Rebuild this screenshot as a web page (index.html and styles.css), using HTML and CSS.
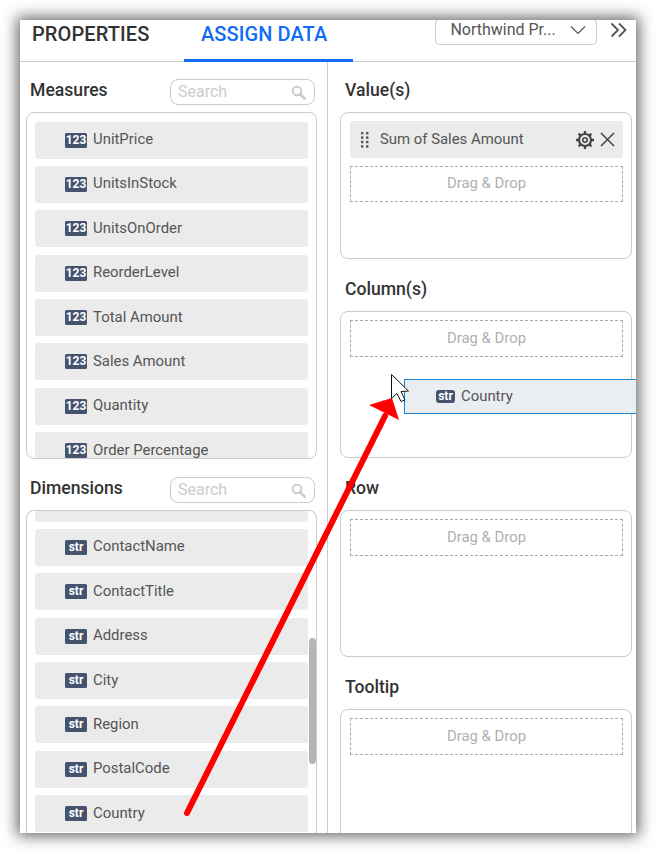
FILE: index.html
```html
<!DOCTYPE html>
<html lang="en">
<head>
    <meta charset="UTF-8">
    <title>Assign Data</title>
    <link rel="stylesheet" href="styles.css">
</head>
<body>
    <div class="panel">
        <div class="tabs">
            <div class="tab">PROPERTIES</div>
            <div class="tab active">ASSIGN DATA</div>
            <div class="source">
                <span>Northwind Pr...</span>
                <svg width="16" height="10" viewBox="0 0 16 10"><path d="M1 1.5 8 8.5 15 1.5" fill="none" stroke="#555" stroke-width="1.2"/></svg>
            </div>
            <svg class="collapse" width="18" height="16" viewBox="0 0 18 16"><path d="M1.500 1.500 8 8 1.500 14.500M9 1.500 15.500 8 9 14.500" fill="none" stroke="#555" stroke-width="1.8"/></svg>
        </div>

        <div class="content">
            <div class="fields">
                <div class="field-head">
                    <h3>Measures</h3>
                    <div class="search">
                        <span>Search</span>
                        <svg width="15" height="15" viewBox="0 0 15 15"><circle cx="6" cy="6" r="4.300" fill="none" stroke="#ccc" stroke-width="2"/><path d="M9 9 13.500 13.500" stroke="#ccc" stroke-width="2.800" stroke-linecap="round"/></svg>
                    </div>
                </div>
                <div class="list measures">
                    <div class="field"><b>123</b>UnitPrice</div>
                    <div class="field"><b>123</b>UnitsInStock</div>
                    <div class="field"><b>123</b>UnitsOnOrder</div>
                    <div class="field"><b>123</b>ReorderLevel</div>
                    <div class="field"><b>123</b>Total Amount</div>
                    <div class="field"><b>123</b>Sales Amount</div>
                    <div class="field"><b>123</b>Quantity</div>
                    <div class="field"><b>123</b>Order Percentage</div>
                </div>

                <div class="field-head dims">
                    <h3>Dimensions</h3>
                    <div class="search">
                        <span>Search</span>
                        <svg width="15" height="15" viewBox="0 0 15 15"><circle cx="6" cy="6" r="4.300" fill="none" stroke="#ccc" stroke-width="2"/><path d="M9 9 13.500 13.500" stroke="#ccc" stroke-width="2.800" stroke-linecap="round"/></svg>
                    </div>
                </div>
                <div class="list dimensions">
                    <div class="field cut"></div>
                    <div class="field"><b>str</b>ContactName</div>
                    <div class="field"><b>str</b>ContactTitle</div>
                    <div class="field"><b>str</b>Address</div>
                    <div class="field"><b>str</b>City</div>
                    <div class="field"><b>str</b>Region</div>
                    <div class="field"><b>str</b>PostalCode</div>
                    <div class="field"><b>str</b>Country</div>
                    <div class="scrollbar"></div>
                </div>
            </div>

            <div class="axes">
                <h3>Value(s)</h3>
                <div class="well">
                    <div class="assigned">
                        <svg class="grip" width="8" height="16" viewBox="0 0 8 16" fill="#555"><rect x="0" y="0" width="2.400" height="2.400"/><rect x="5" y="0" width="2.400" height="2.400"/><rect x="0" y="4.400" width="2.400" height="2.400"/><rect x="5" y="4.400" width="2.400" height="2.400"/><rect x="0" y="8.800" width="2.400" height="2.400"/><rect x="5" y="8.800" width="2.400" height="2.400"/><rect x="0" y="13.200" width="2.400" height="2.400"/><rect x="5" y="13.200" width="2.400" height="2.400"/></svg>
                        <span class="assigned-name">Sum of Sales Amount</span>
                        <svg width="18" height="18" viewBox="0 0 18 18"><circle cx="9" cy="9" r="6" fill="none" stroke="#444" stroke-width="2.200"/><circle cx="9" cy="9" r="2.200" fill="none" stroke="#444" stroke-width="1.600"/><path d="M9 0V3.500M9 14.500V18M0 9H3.500M14.500 9H18M2.700 2.700 5 5M13 13 15.300 15.300M2.700 15.300 5 13M13 5 15.300 2.700" stroke="#444" stroke-width="2.400"/></svg>
                        <svg class="remove" width="15" height="15" viewBox="0 0 15 15"><path d="M1 1 14 14M14 1 1 14" stroke="#444" stroke-width="1.500"/></svg>
                    </div>
                    <div class="drop">Drag &amp; Drop</div>
                </div>
                <h3>Column(s)</h3>
                <div class="well">
                    <div class="drop">Drag &amp; Drop</div>
                </div>
                <h3>Row</h3>
                <div class="well">
                    <div class="drop">Drag &amp; Drop</div>
                </div>
                <h3>Tooltip</h3>
                <div class="well">
                    <div class="drop">Drag &amp; Drop</div>
                </div>
            </div>
        </div>

        <div class="ghost"><b>str</b>Country</div>
    </div>

    <svg class="marks" width="656" height="853" viewBox="0 0 656 853">
        <path d="M187 813 385 416" fill="none" stroke="#fe0000" stroke-width="6" stroke-linecap="round"/>
        <path d="M392 398 369 405 399 420Z" fill="#fe0000"/>
        <path d="M391.500 374.500V398.500L397 393.500 401 401.500 405 400 401 391.500 408.500 391Z" fill="#fff" stroke="#111" stroke-width="1"/>
    </svg>
</body>
</html>
```

FILE: styles.css
```css
body {
    margin: 0;
    background: #fff;
    font-family: 'Roboto', 'Liberation Sans', sans-serif;
}

.panel {
    position: relative;
    width: 616px;
    height: 813px;
    margin: 20px 0 0 20px;
    background: #fff;
    overflow: hidden;
}

/* shadow sits on its own so the panel can clip the content */
body::before {
    content: "";
    position: absolute;
    left: 20px;
    top: 20px;
    width: 616px;
    height: 813px;
    box-shadow: 0 0 14px 3px rgba(0, 0, 0, 0.6);
}

.tabs {
    display: flex;
    height: 41px;
    border-bottom: 1px solid #ccc;
}

.tab {
    padding: 3px 12px 0;
    font-size: 20px;
    line-height: 22px;
    font-weight: 500;
    letter-spacing: 0.1px;
    color: #333;
}

.tab.active {
    box-sizing: border-box;
    width: 169px;
    height: 42px;
    margin-left: 23px;
    padding: 3px 0 0 16.5px;
    color: #0f6cf5;
    border-bottom: 3px solid #0f6cf5;
}

.source {
    display: flex;
    align-items: center;
    justify-content: space-between;
    box-sizing: border-box;
    width: 162px;
    height: 26px;
    margin: -1px 0 0 82px;
    padding: 0 10px 5px 14px;
    border: 1px solid #ccc;
    border-radius: 4px;
    font-size: 16px;
    color: #555;
}

.collapse {
    margin: 2px 0 0 13px;
}

.content {
    display: flex;
    height: 771px;
}

.fields {
    box-sizing: border-box;
    width: 308px;
    padding: 0 10px 0 6px;
    border-right: 1px solid #ccc;
}

h3 {
    margin: 0;
    font-size: 17.6px;
    line-height: 22px;
    font-weight: 500;
    color: #333;
}

.field-head {
    display: flex;
    justify-content: space-between;
    align-items: flex-start;
    height: 50px;
    padding: 17px 2px 0 4px;
    box-sizing: border-box;
}

.field-head.dims {
    height: 51px;
    padding-top: 18px;
}

.search {
    display: flex;
    justify-content: space-between;
    align-items: center;
    box-sizing: border-box;
    width: 145px;
    height: 26px;
    padding: 0 8px 0 7px;
    border: 1px solid #ccc;
    border-radius: 8px;
    font-size: 16px;
    color: #ccc;
}

.search span {
    margin-top: -2px;
}

.list {
    position: relative;
    box-sizing: border-box;
    display: flex;
    flex-direction: column;
    gap: 7.4px;
    border: 1px solid #ccc;
    border-radius: 8px;
    padding: 8.5px 8px 0;
    overflow: hidden;
}

.measures {
    height: 347px;
}

.dimensions {
    height: 340px;
    padding-top: 0;
    border-bottom: 0;
    border-radius: 8px 8px 0 0;
}

.field {
    display: flex;
    align-items: center;
    flex: none;
    box-sizing: border-box;
    height: 37px;
    padding: 0 0 2px 30px;
    background: #ebebeb;
    border-radius: 3px;
    font-size: 14.9px;
    color: #555;
}

.field.cut {
    height: 10.5px;
}

.field b, .ghost b {
    width: 22px;
    height: 15px;
    margin: 2px 6px 0 0;
    background: #45536f;
    border-radius: 1.5px;
    font-size: 12px;
    line-height: 15px;
    font-weight: 700;
    text-align: center;
    color: #fff;
}

.scrollbar {
    position: absolute;
    right: 0;
    top: 127px;
    width: 7px;
    height: 126px;
    background: #b5b5b5;
    border-radius: 4px;
}

.axes {
    flex: 1;
    padding: 0 4px 0 12px;
}

.axes h3 {
    padding: 17px 0 11px 5px;
    height: 22px;
}

.well {
    box-sizing: border-box;
    height: 147px;
    margin-bottom: 2px;
    padding: 8px 8px 8px 9px;
    border: 1px solid #ccc;
    border-radius: 8px;
}

.assigned {
    display: flex;
    align-items: center;
    box-sizing: border-box;
    height: 37px;
    margin-bottom: 8px;
    padding: 0 8px 0 11px;
    background: #ebebeb;
    border-radius: 3px;
    font-size: 14.9px;
    color: #555;
}

.assigned-name {
    flex: 1;
    margin: -2px 0 0 11px;
}

.remove {
    margin-left: 6px;
}

.drop {
    box-sizing: border-box;
    height: 37px;
    border: 1px dashed #aaa;
    font-size: 14.9px;
    line-height: 35px;
    text-align: center;
    color: #b0b0b0;
}

.assigned + .drop {
    height: 36px;
    line-height: 33px;
}

.ghost {
    position: absolute;
    left: 384px;
    top: 359px;
    box-sizing: border-box;
    display: flex;
    align-items: center;
    width: 240px;
    height: 35px;
    padding: 0 0 2px 31px;
    background: #ebeef1;
    border: 1px solid #1a87d8;
    font-size: 14.9px;
    color: #555;
}

.ghost b {
    width: 19px;
    height: 13px;
    line-height: 13px;
    border-radius: 3px;
}

.marks {
    position: absolute;
    left: 0;
    top: 0;
}
```
